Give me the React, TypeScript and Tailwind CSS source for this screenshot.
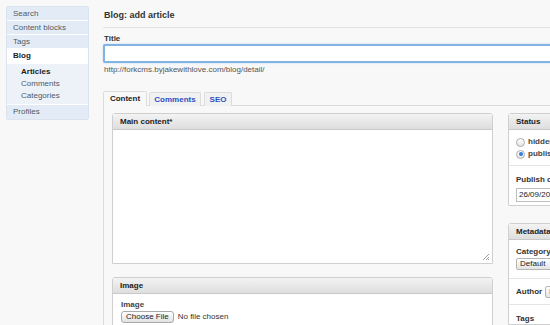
import React from "react";

const Box = ({ title, children }: { title: string; children: React.ReactNode }) => (
  <section className="rounded-t-[3px] border border-[#cfcfcf] bg-white">
    <header className="h-[16px] border-b border-[#c9c9c9] bg-gradient-to-b from-[#f3f3f3] to-[#dedede] pl-[7px] text-[8px] font-bold leading-[16px] text-[#222]">
      {title}
    </header>
    {children}
  </section>
);

const Radio = ({ checked, label }: { checked?: boolean; label: string }) => (
  <label className="flex h-[12px] items-center gap-[3px] text-[8px] font-bold text-[#444]">
    <span className="flex size-[9px] items-center justify-center rounded-full border border-[#aaa] bg-gradient-to-b from-white to-[#e6e6e6]">
      {checked && <span className="size-[4px] rounded-full bg-[#2f7de1]" />}
    </span>
    {label}
  </label>
);

const SideItem = ({ label, active }: { label: string; active?: boolean }) => (
  <li
    className={
      active
        ? "h-[15px] border-b border-white bg-white pl-[6px] font-bold leading-[14px] text-[#222]"
        : "h-[14px] border-b border-white bg-[#e3ecf6] pl-[6px] leading-[13px] text-[#4f5a67]"
    }
  >
    {label}
  </li>
);

export default function App() {
  return (
    <div className="flex h-[325px] w-[550px] overflow-hidden bg-[#f8f8f8] font-['Liberation_Sans',Arial,sans-serif] text-[8px] text-[#333]">
      {/* sidebar */}
      <aside className="w-[103px] shrink-0 pl-[6px] pt-[6px]">
        <ul className="w-[83px] rounded-[2px] border border-[#dbe4ee] bg-[#edf2f9]">
          <SideItem label="Search" />
          <SideItem label="Content blocks" />
          <SideItem label="Tags" />
          <SideItem label="Blog" active />
          <li className="border-b border-white bg-[#edf2f9] py-[2px] pl-[14px] text-[#4f5a67]">
            <div className="h-[12px] font-bold leading-[12px] text-[#222]">Articles</div>
            <div className="h-[12px] leading-[12px]">Comments</div>
            <div className="h-[12px] leading-[12px]">Categories</div>
          </li>
          <li className="h-[14px] bg-[#e3ecf6] pl-[6px] leading-[14px] text-[#4f5a67]">Profiles</li>
        </ul>
      </aside>

      {/* main */}
      <main className="w-[640px] shrink-0">
        <div className="h-[28px] border-b border-[#e2e2e2] pl-[1px] pt-[10px]">
          <h1 className="text-[9px] font-bold leading-[11px] text-[#333]">Blog: add article</h1>
        </div>

        <div className="mt-[6px] pl-[1px] text-[8px] font-bold leading-[10px] text-[#333]">Title</div>
        <input className="block h-[19px] w-full rounded-[2px] border-2 border-[#82b3e3] bg-white shadow-[0_0_2px_#b7d3ef] outline-none" />
        <div className="mt-[2px] pl-[1px] leading-[10px] text-[#555]">http://forkcms.byjakewithlove.com/blog/detail/</div>

        {/* tabs */}
        <div className="mt-[17px] flex h-[14px] items-end">
          <div className="h-[15px] w-[44px] rounded-t-[2px] border border-b-0 border-[#dcdcdc] bg-[#f8f8f8] text-center font-bold leading-[14px] text-[#222]">
            Content
          </div>
          <div className="h-[14px] flex-1 border-b border-[#dcdcdc] pl-[2px]">
            <div className="flex gap-[2px]">
              <div className="h-[14px] w-[52px] rounded-t-[2px] border border-b-0 border-[#dcdcdc] bg-[#f1f1f1] text-center font-bold leading-[13px] text-[#2d4fc4]">
                Comments
              </div>
              <div className="ml-[1px] h-[14px] w-[28px] rounded-t-[2px] border border-b-0 border-[#dcdcdc] bg-[#f1f1f1] text-center font-bold leading-[13px] text-[#2d4fc4]">
                SEO
              </div>
            </div>
          </div>
        </div>

        {/* tab panel */}
        <div className="flex h-[240px] gap-[15px] border-l border-[#dcdcdc] pl-[8px] pt-[7px]">
          <div className="w-[381px] shrink-0">
            <Box title="Main content*">
              <div className="relative h-[133px]">
                <svg className="absolute bottom-[2px] right-[2px]" width="8" height="8" viewBox="0 0 8 8">
                  <path d="M7 1 L1 7 M7 4 L4 7 M7 6 L6 7" stroke="#888" strokeWidth="0.8" />
                </svg>
              </div>
            </Box>
            <div className="mt-[13px]">
              <Box title="Image">
                <div className="h-[60px] pl-[8px] pt-[6px]">
                  <div className="font-bold leading-[10px] text-[#444]">Image</div>
                  <div className="mt-[1px] flex items-center gap-[4px]">
                    <span className="h-[12px] rounded-[3px] border border-[#a9a9a9] bg-gradient-to-b from-white to-[#e2e2e2] px-[4px] leading-[10px] text-[#222]">
                      Choose File
                    </span>
                    <span className="text-[#333]">No file chosen</span>
                  </div>
                </div>
              </Box>
            </div>
          </div>

          <div className="w-[160px] shrink-0">
            <Box title="Status">
              <div className="border-b border-[#e4e4e4] px-[7px] pb-[5px] pt-[6px]">
                <Radio label="hidden" />
                <Radio label="published" checked />
              </div>
              <div className="px-[7px] pb-[3px] pt-[9px]">
                <div className="font-bold leading-[10px] text-[#333]">Publish on</div>
                <div className="mt-[3px] h-[14px] w-[70px] border border-[#bdbdbd] bg-white pl-[2px] text-[8px] leading-[12px] text-[#222]">
                  26/09/2011
                </div>
              </div>
            </Box>
            <div className="mt-[17px]">
              <Box title="Metadata">
                <div className="border-b border-[#e4e4e4] px-[7px] pb-[8px] pt-[7px]">
                  <div className="font-bold leading-[10px] text-[#333]">Category</div>
                  <div className="mt-[1px] h-[12px] w-[60px] rounded-[2px] border border-[#b5b5b5] bg-gradient-to-b from-white to-[#e4e4e4] pl-[3px] leading-[10px] text-[#222]">
                    Default
                  </div>
                </div>
                <div className="flex h-[26px] items-center gap-[3px] border-b border-[#e4e4e4] px-[7px]">
                  <span className="font-bold text-[#333]">Author</span>
                  <span className="h-[12px] w-[60px] rounded-[2px] border border-[#b5b5b5] bg-gradient-to-b from-white to-[#e4e4e4] pl-[3px] leading-[10px] text-[#222]">
                    Bart
                  </span>
                </div>
                <div className="px-[7px] pt-[9px] font-bold leading-[10px] text-[#333]">Tags</div>
              </Box>
            </div>
          </div>
        </div>
      </main>
    </div>
  );
}
